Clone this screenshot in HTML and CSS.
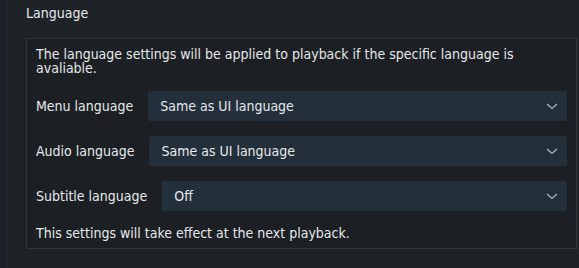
FILE: index.html
```html
<!DOCTYPE html>
<html>
<head>
<meta charset="utf-8">
<link rel="stylesheet" href="styles.css">
</head>
<body>
<div class="page">
  <div class="rail"></div>
  <main class="main">
    <h2 class="title">Language</h2>
    <section class="panel">
      <p class="note intro">The language settings will be applied to playback if the specific language is avaliable.</p>
      <div class="row">
        <span class="label">Menu language</span>
        <div class="select"><span>Same as UI language</span>
          <svg class="chev" width="12" height="7" viewBox="0 0 12 7"><path d="M1 1 L6 5.5 L11 1" fill="none" stroke="#a9b6c3" stroke-width="1.3"/></svg>
        </div>
      </div>
      <div class="row">
        <span class="label">Audio language</span>
        <div class="select"><span>Same as UI language</span>
          <svg class="chev" width="12" height="7" viewBox="0 0 12 7"><path d="M1 1 L6 5.5 L11 1" fill="none" stroke="#a9b6c3" stroke-width="1.3"/></svg>
        </div>
      </div>
      <div class="row">
        <span class="label">Subtitle language</span>
        <div class="select"><span>Off</span>
          <svg class="chev" width="12" height="7" viewBox="0 0 12 7"><path d="M1 1 L6 5.5 L11 1" fill="none" stroke="#a9b6c3" stroke-width="1.3"/></svg>
        </div>
      </div>
      <p class="note foot">This settings will take effect at the next playback.</p>
    </section>
  </main>
</div>
</body>
</html>
```
FILE: styles.css
```css
html, body {
  margin: 0;
  height: 100%;
  background: #1e2327;
}
body {
  font-family: "DejaVu Sans Condensed", "DejaVu Sans", sans-serif;
  font-stretch: condensed;
  font-size: 14px;
  color: #e6e8ea;
}
.page {
  display: flex;
  min-height: 268px;
}
.rail {
  width: 6px;
  flex: none;
  background: #1b2127;
  border-right: 1px solid #242a30;
}
.main {
  flex: 1;
  padding: 0 2px 0 19px;
}
.title {
  margin: 0;
  font-size: 14px;
  font-weight: normal;
  line-height: 15px;
  padding-top: 6px;
  height: 32px;
  box-sizing: border-box;
}
.panel {
  border: 1px solid #30363c;
  background: #1c2024;
  padding: 8px 9px 8px 9px;
  margin-top: 6px;
}
.note {
  margin: 0;
  line-height: 14px;
}
.intro {
  max-width: 500px;
}
.row {
  display: flex;
  align-items: center;
  gap: 15px;
  margin-top: 15px;
}
.intro + .row {
  margin-top: 16px;
}
.label {
  flex: none;
}
.select {
  flex: 1;
  height: 30px;
  background: #232f3b;
  border-radius: 2px;
  display: flex;
  align-items: center;
  justify-content: space-between;
  padding: 0 9px 0 12px;
}
.chev {
  display: block;
}
.foot {
  margin-top: 15px;
}
```
